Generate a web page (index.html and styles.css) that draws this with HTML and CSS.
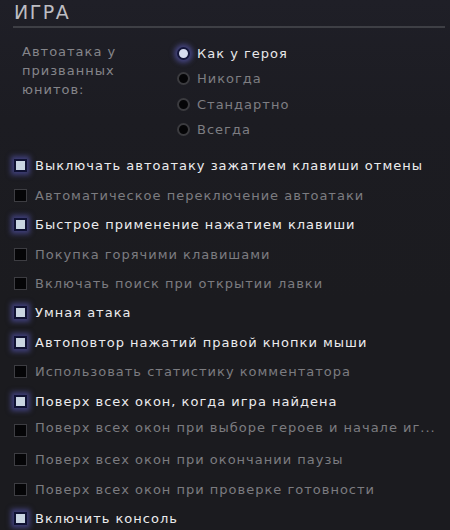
FILE: index.html
```html
<!DOCTYPE html>
<html lang="ru">
<head>
<meta charset="utf-8">
<title>Игра</title>
<link rel="stylesheet" href="styles.css">
</head>
<body>
<div class="panel">
  <h1 class="title">ИГРА</h1>
  <div class="divider"></div>
  <div class="autoattack">
    <div class="aa-label">Автоатака у<br>призванных<br>юнитов:</div>
    <div class="radios">
      <div class="radio-row on"><span class="radio"></span><span>Как у героя</span></div>
      <div class="radio-row"><span class="radio"></span><span>Никогда</span></div>
      <div class="radio-row"><span class="radio"></span><span>Стандартно</span></div>
      <div class="radio-row"><span class="radio"></span><span>Всегда</span></div>
    </div>
  </div>
  <div class="options">
    <div class="opt on"><span class="box"></span><span class="txt">Выключать автоатаку зажатием клавиши отмены</span></div>
    <div class="opt"><span class="box"></span><span class="txt">Автоматическое переключение автоатаки</span></div>
    <div class="opt on"><span class="box"></span><span class="txt">Быстрое применение нажатием клавиши</span></div>
    <div class="opt"><span class="box"></span><span class="txt">Покупка горячими клавишами</span></div>
    <div class="opt"><span class="box"></span><span class="txt">Включать поиск при открытии лавки</span></div>
    <div class="opt on"><span class="box"></span><span class="txt">Умная атака</span></div>
    <div class="opt on"><span class="box"></span><span class="txt">Автоповтор нажатий правой кнопки мыши</span></div>
    <div class="opt"><span class="box"></span><span class="txt">Использовать статистику комментатора</span></div>
    <div class="opt on"><span class="box"></span><span class="txt">Поверх всех окон, когда игра найдена</span></div>
    <div class="opt wrap"><span class="box"></span><span class="txt">Поверх всех окон при выборе героев и начале иг...</span></div>
    <div class="opt"><span class="box"></span><span class="txt">Поверх всех окон при окончании паузы</span></div>
    <div class="opt"><span class="box"></span><span class="txt">Поверх всех окон при проверке готовности</span></div>
    <div class="opt on"><span class="box"></span><span class="txt">Включить консоль</span></div>
  </div>
</div>
</body>
</html>
```
FILE: styles.css
```css
html, body {
  margin: 0;
  padding: 0;
  background: #1b1b1f;
}
body {
  width: 450px;
  height: 530px;
  overflow: hidden;
  font-family: "DejaVu Sans", sans-serif;
}
.panel {
  background: linear-gradient(#1f1f27 0px, #1c1c22 120px, #1b1b1f 300px);
  height: 530px;
  padding: 0 5px 0 13px;
  box-sizing: border-box;
}
.title {
  margin: 0;
  padding: 1px 0 0 1px;
  font-size: 19px;
  line-height: 22px;
  font-weight: normal;
  letter-spacing: 1.5px;
  color: #bdbdc2;
}
.divider {
  height: 2px;
  background: #3e3f45;
  margin-top: 3px;
}
.autoattack {
  display: flex;
  margin-top: 16px;
}
.aa-label {
  width: 164px;
  padding-left: 9px;
  box-sizing: border-box;
  font-size: 13px;
  line-height: 19px;
  letter-spacing: 1px;
  color: #85858a;
  margin-top: -2px;
}
.radios {
  display: flex;
  flex-direction: column;
  margin-top: -3px;
}
.radio-row {
  display: flex;
  align-items: center;
  height: 25.3px;
  font-size: 13px;
  letter-spacing: 1px;
  color: #7e7e82;
  gap: 7px;
}
.radio {
  flex: none;
  width: 9px;
  height: 9px;
  border-radius: 50%;
  background: #050507;
  border: 2px solid #3b3b3f;
}
.radio-row.on { color: #e8e8ea; }
.radio-row.on .radio {
  background: #d6dcef;
  border-color: #14163a;
  box-shadow: 0 0 5px 3px rgba(105, 105, 215, 0.5);
}
.options {
  margin-top: 9px;
  margin-left: 1px;
}
.opt {
  display: flex;
  align-items: center;
  height: 29.4px;
  font-size: 13px;
  letter-spacing: 1px;
  color: #7c7c80;
  gap: 8px;
  white-space: nowrap;
}
.opt .box {
  flex: none;
  width: 11px;
  height: 11px;
  background: #050507;
  border: 1px solid #3d3d42;
}
.opt.on { color: #ececee; }
.opt.on .box {
  width: 9px;
  height: 9px;
  background: #c9d5e2;
  border: 2px solid #101233;
  box-shadow: 0 0 5px 3px rgba(100, 100, 210, 0.5);
}
.opt.wrap .txt {
  position: relative;
  top: -3px;
}
```
